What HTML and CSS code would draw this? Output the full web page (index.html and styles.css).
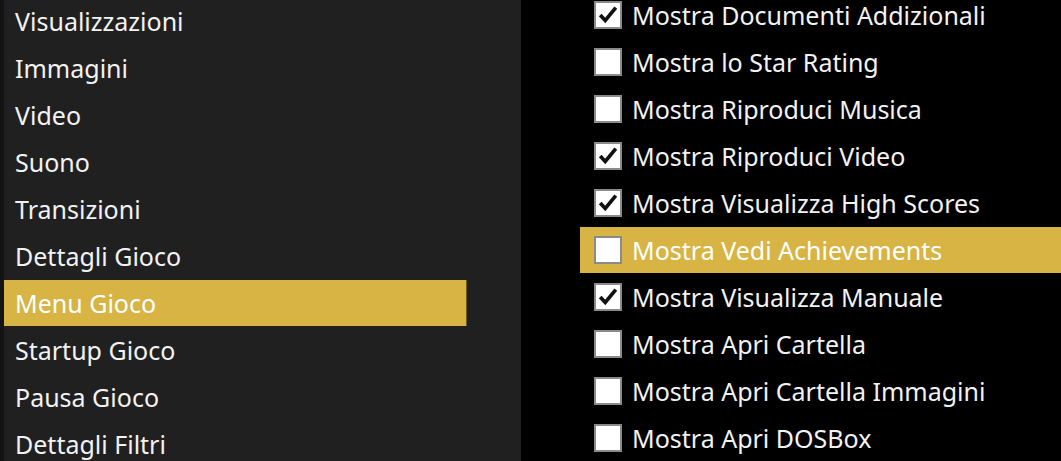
FILE: index.html
```html
<!DOCTYPE html>
<html lang="it">
<head>
    <meta charset="UTF-8">
    <title>Impostazioni Menu Gioco</title>
    <link rel="stylesheet" href="styles.css">
</head>
<body>
    <div class="sidebar">
        <ul class="menu">
            <li>Visualizzazioni</li>
            <li>Immagini</li>
            <li>Video</li>
            <li>Suono</li>
            <li>Transizioni</li>
            <li>Dettagli Gioco</li>
            <li class="selected">Menu Gioco</li>
            <li>Startup Gioco</li>
            <li>Pausa Gioco</li>
            <li>Dettagli Filtri</li>
        </ul>
    </div>

    <div class="options">
        <ul id="options-list" class="option-list"></ul>
    </div>

<script>
    const options = [
        ["Mostra Documenti Addizionali", true],
        ["Mostra lo Star Rating", false],
        ["Mostra Riproduci Musica", false],
        ["Mostra Riproduci Video", true],
        ["Mostra Visualizza High Scores", true],
        ["Mostra Vedi Achievements", false],
        ["Mostra Visualizza Manuale", true],
        ["Mostra Apri Cartella", false],
        ["Mostra Apri Cartella Immagini", false],
        ["Mostra Apri DOSBox", false]
    ];
    const selectedOption = 5;

    const list = document.getElementById('options-list');
    const tick = '<svg viewBox="0 0 24 24" width="22" height="22"><path d="M3.5 12 L9 18 L20.5 4" fill="none" stroke="#111" stroke-width="4" stroke-linejoin="miter"/></svg>';

    options.forEach(([label, checked], i) => {
        const row = document.createElement('li');
        if (i === selectedOption) row.className = 'selected';

        const box = document.createElement('span');
        box.className = 'checkbox';
        if (checked) box.innerHTML = tick;

        const text = document.createElement('span');
        text.textContent = label;

        row.appendChild(box);
        row.appendChild(text);
        list.appendChild(row);
    });
</script>
</body>
</html>
```

FILE: styles.css
```css
body {
    margin: 0;
    display: flex;
    height: 461px;
    overflow: hidden;
    background-color: #000;
    font-family: "Noto Sans", "Open Sans", sans-serif;
    font-size: 25px;
    color: #f2f2f2;
}
ul {
    list-style-type: none;
    margin: 0;
    padding: 0;
}
.sidebar {
    width: 517px;
    flex-shrink: 0;
    background-color: #202020;
    border-left: 4px solid #141414;
}
.menu {
    margin-top: -2px;
    width: 463px;
}
.menu li {
    height: 46px;
    margin-bottom: 1px;
    padding-left: 11px;
    display: flex;
    align-items: center;
}
.menu li.selected {
    background-color: #d7b443;
    color: #fff;
    box-shadow: inset -1px 0 0 #6d5a1e;
}
.options {
    flex: 1;
    padding-left: 59px;
}
.option-list {
    margin-top: -8px;
}
.option-list li {
    height: 46px;
    margin-bottom: 1px;
    padding-left: 14px;
    display: flex;
    align-items: center;
}
.option-list li.selected {
    background-color: #d7b443;
    color: #fff;
}
.checkbox {
    width: 24px;
    height: 24px;
    border: 2px solid #8a8a8a;
    background-color: #fff;
    margin-right: 10px;
    flex-shrink: 0;
    display: flex;
    align-items: center;
    justify-content: center;
}
```
